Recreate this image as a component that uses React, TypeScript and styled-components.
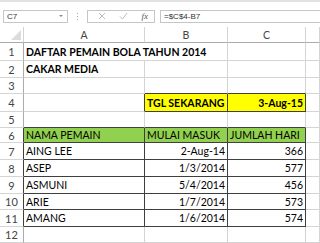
import React from 'react'
import styled, { createGlobalStyle } from 'styled-components'

const GlobalStyle = createGlobalStyle`
  html, body {
    margin: 0;
    padding: 0;
    background: #ffffff;
  }
  body {
    font-family: Lato, 'Liberation Sans', sans-serif;
    color: #000;
  }
`

const GRID = '#d4d4d4'
const DARK = '#3f3f3f'
const COLS = '24px 121px 83px 78px 14px'

const Sheet = styled.div`
  width: 320px;
  height: 243px;
  overflow: hidden;
  display: flex;
  flex-direction: column;
`

const TopBar = styled.div`
  height: 28px;
  box-sizing: border-box;
  border-top: 2px solid #e1e1e1;
  padding: 3px 0 0 3px;
  display: flex;
  align-items: center;
`

const NameBox = styled.div`
  width: 65px;
  height: 13px;
  box-sizing: border-box;
  border: 1px solid #c6c6c6;
  display: flex;
  align-items: center;
  justify-content: space-between;
  padding: 0 4px 0 3px;
  font-family: 'Liberation Sans', sans-serif;
  font-size: 8px;
  color: #333;
`

const Caret = styled.span`
  width: 0;
  height: 0;
  border-left: 2px solid transparent;
  border-right: 2px solid transparent;
  border-top: 2px solid #8a8a8a;
`

const Dots = styled.div`
  width: 19px;
  display: flex;
  flex-direction: column;
  align-items: center;
  gap: 2px;
  span {
    width: 1px;
    height: 1px;
    background: #a8a8a8;
  }
`

const IconBox = styled.div`
  width: 68px;
  height: 13px;
  box-sizing: border-box;
  border: 1px solid #c6c6c6;
  display: flex;
  align-items: center;
  justify-content: space-between;
  padding: 0 6px 0 10px;
`

const Fx = styled.span`
  font-family: 'Liberation Serif', serif;
  font-style: italic;
  font-size: 9px;
  color: #555;
`

const FormulaBox = styled.div`
  flex: 1;
  margin-left: 5px;
  height: 13px;
  box-sizing: border-box;
  border: 1px solid #c6c6c6;
  border-right: none;
  display: flex;
  align-items: center;
  padding-left: 3px;
  font-family: 'Liberation Sans', sans-serif;
  font-size: 8px;
  color: #333;
`

const Grid = styled.div`
  display: grid;
  grid-template-columns: ${COLS};
`

const HeadCell = styled.div`
  height: 16px;
  box-sizing: border-box;
  border-right: 1px solid ${GRID};
  border-bottom: 1px solid #ababab;
  display: flex;
  align-items: center;
  justify-content: center;
  font-size: 10.5px;
  color: #444;
  position: relative;
`

const Corner = styled.span`
  position: absolute;
  right: 2px;
  bottom: 2px;
  width: 0;
  height: 0;
  border-left: 10px solid transparent;
  border-bottom: 10px solid #dcdcdc;
`

const RowNum = styled.div<{ $dark?: boolean }>`
  box-sizing: border-box;
  border-right: 1px solid ${({ $dark }) => ($dark ? DARK : '#ababab')};
  border-bottom: 1px solid ${GRID};
  display: flex;
  align-items: center;
  justify-content: center;
  font-size: 11px;
  color: #444;
`

const Cell = styled.div<{
  $bg?: string
  $bold?: boolean
  $align?: 'left' | 'right'
  $dr?: boolean
  $db?: boolean
  $span?: number
}>`
  box-sizing: border-box;
  grid-column: span ${({ $span }) => $span || 1};
  background: ${({ $bg }) => $bg || '#fff'};
  border-right: 1px solid ${({ $dr }) => ($dr ? DARK : GRID)};
  border-bottom: 1px solid ${({ $db }) => ($db ? DARK : GRID)};
  display: flex;
  align-items: center;
  justify-content: ${({ $align }) => ($align === 'right' ? 'flex-end' : 'flex-start')};
  padding: 0 2px 0 2px;
  font-size: 10.5px;
  font-weight: ${({ $bold }) => ($bold ? 700 : 400)};
  white-space: nowrap;
  overflow: visible;
`

type C = {
  t?: string
  bg?: string
  bold?: boolean
  align?: 'left' | 'right'
  dr?: boolean
  db?: boolean
  span?: number
}

type Row = { n: number; h: number; dark?: boolean; cells: C[] }

const GREEN = '#92d050'
const YELLOW = '#ffff00'

const dataRow = (n: number, h: number, name: string, date: string, days: string): Row => ({
  n,
  h,
  dark: true,
  cells: [
    { t: name, dr: true, db: true },
    { t: date, align: 'right', dr: true, db: true },
    { t: days, align: 'right', dr: true, db: true },
    {},
  ],
})

const rows: Row[] = [
  { n: 1, h: 18, cells: [{ t: 'DAFTAR PEMAIN BOLA TAHUN 2014', bold: true, span: 2 }, {}, {}] },
  { n: 2, h: 17, cells: [{ t: 'CAKAR MEDIA', bold: true }, {}, {}, {}] },
  { n: 3, h: 16, cells: [{}, { db: true }, { db: true }, {}] },
  {
    n: 4,
    h: 18,
    cells: [
      { dr: true },
      { t: 'TGL SEKARANG', bold: true, bg: YELLOW, dr: true, db: true },
      { t: '3-Aug-15', bold: true, bg: YELLOW, align: 'right', dr: true, db: true },
      {},
    ],
  },
  { n: 5, h: 16, cells: [{ db: true }, { db: true }, { db: true }, {}] },
  {
    n: 6,
    h: 15,
    dark: true,
    cells: [
      { t: 'NAMA PEMAIN', bg: GREEN, dr: true, db: true },
      { t: 'MULAI MASUK', bg: GREEN, dr: true, db: true },
      { t: 'JUMLAH HARI', bg: GREEN, dr: true, db: true },
      {},
    ],
  },
  dataRow(7, 17, 'AING LEE', '2-Aug-14', '366'),
  dataRow(8, 17, 'ASEP', '1/3/2014', '577'),
  dataRow(9, 17, 'ASMUNI', '5/4/2014', '456'),
  dataRow(10, 16, 'ARIE', '1/7/2014', '573'),
  dataRow(11, 17, 'AMANG', '1/6/2014', '574'),
  { n: 12, h: 16, cells: [{}, {}, {}, {}] },
]

export default function App() {
  return (
    <>
      <GlobalStyle />
      <Sheet>
        <TopBar>
          <NameBox>
            <span>C7</span>
            <Caret />
          </NameBox>
          <Dots>
            <span />
            <span />
            <span />
          </Dots>
          <IconBox>
            <svg width="8" height="8" viewBox="0 0 8 8">
              <path d="M1 1 L7 7 M7 1 L1 7" stroke="#b4b4b4" strokeWidth="0.9" />
            </svg>
            <svg width="9" height="8" viewBox="0 0 9 8">
              <path d="M1 4.5 L3.5 7 L8 1" stroke="#b4b4b4" strokeWidth="0.9" fill="none" />
            </svg>
            <Fx>fx</Fx>
          </IconBox>
          <FormulaBox>=$C$4-B7</FormulaBox>
        </TopBar>
        <Grid>
          <HeadCell>
            <Corner />
          </HeadCell>
          <HeadCell>A</HeadCell>
          <HeadCell>B</HeadCell>
          <HeadCell>C</HeadCell>
          <HeadCell />
          {rows.map((r) => (
            <React.Fragment key={r.n}>
              <RowNum $dark={r.dark} style={{ height: r.h }}>
                {r.n}
              </RowNum>
              {r.cells.map((c, i) => (
                <Cell
                  key={i}
                  $bg={c.bg}
                  $bold={c.bold}
                  $align={c.align}
                  $dr={c.dr}
                  $db={c.db}
                  $span={c.span}
                >
                  {c.t}
                </Cell>
              ))}
            </React.Fragment>
          ))}
        </Grid>
      </Sheet>
    </>
  )
}
